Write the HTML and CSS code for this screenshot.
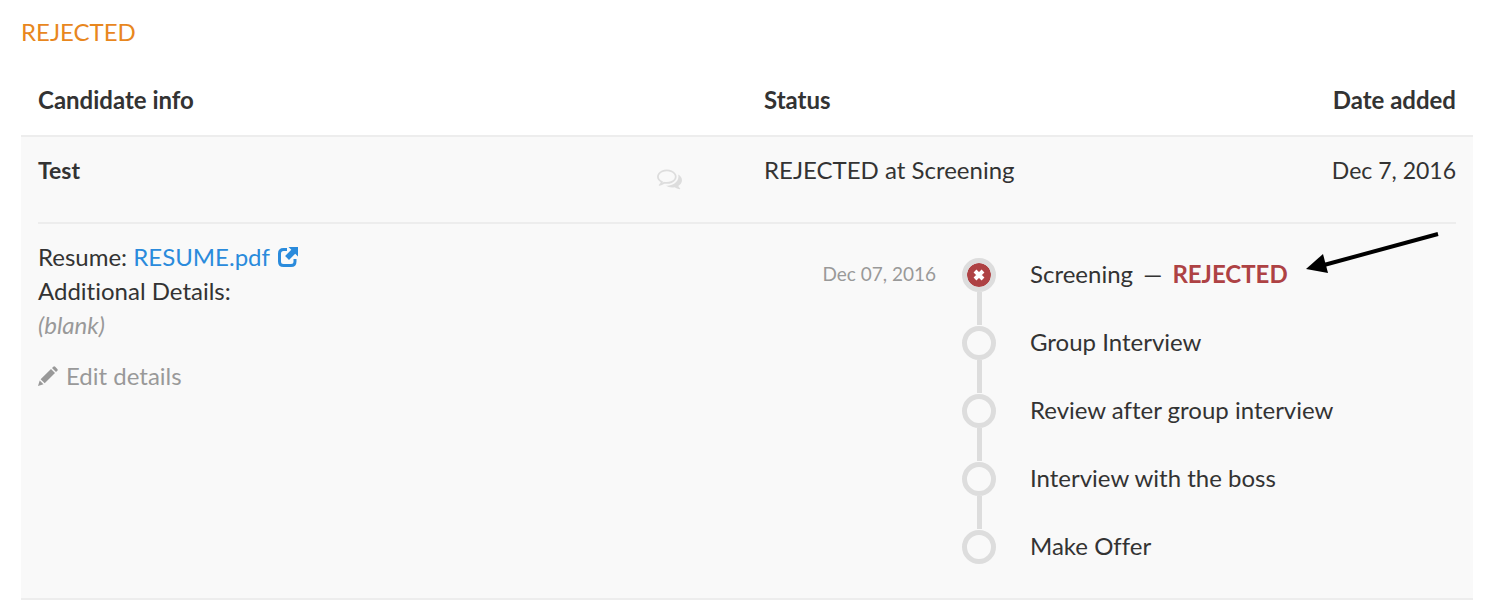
FILE: index.html
```html
<!DOCTYPE html>
<html lang="en">
<head>
    <meta charset="UTF-8">
    <meta name="viewport" content="width=device-width, initial-scale=1.0">
    <title>Rejected candidates</title>
    <link rel="stylesheet" href="styles.css">
</head>
<body>
    <h2 class="section-title">REJECTED</h2>

    <table class="candidates">
        <thead>
            <tr>
                <th class="col-info" scope="col">Candidate info</th>
                <th scope="col">Status</th>
                <th class="col-date" scope="col">Date added</th>
            </tr>
        </thead>
        <tbody>
            <tr class="summary">
                <td>
                    <div class="candidate">
                        <strong class="candidate-name">Test</strong>
                        <button type="button" class="comments-button" aria-label="Comments">
                            <svg viewBox="0 0 1792 1792" aria-hidden="true"><path d="M704 384q-153 0-286 52t-211.500 141-78.500 191q0 82 53 158t149 132l97 56-35 84q34-20 62-39l44-31 53 10q78 14 153 14 153 0 286-52t211.500-141 78.500-191-78.500-191-211.500-141-286-52zm0-128q191 0 353.500 68.500t256.500 186.500 94 257-94 257-256.500 186.500-353.500 68.500q-86 0-176-16-124 88-278 128-36 9-86 16h-3q-11 0-20.500-8t-11.500-21q-1-3-1-6.500t.5-6.500 2-6l2.500-5 3.500-5.500 4-5 4.500-5 4-4.500q5-6 23-25t26-29.500 22.500-29 25-38.500 20.500-44q-124-72-195-177t-71-224q0-139 94-257t256.500-186.500 353.500-68.500zm822 1169q10 24 20.500 44t25 38.500 22.500 29 26 29.500 23 25q1 1 4 4.500t4.500 5 4 5 3.500 5.500l2.500 5 2 6 .5 6.500-1 6.500q-3 14-13 22t-22 7q-50-7-86-16-154-40-278-128-90 16-176 16-271 0-472-132 58 4 88 4 161 0 309-45t264-129q125-92 192-212t67-254q0-77-23-152 129 71 204 178t75 230q0 120-71 224.500t-195 176.500z"/></svg>
                        </button>
                    </div>
                </td>
                <td>REJECTED at Screening</td>
                <td class="col-date">Dec 7, 2016</td>
            </tr>
            <tr class="expanded">
                <td colspan="3">
                    <div class="panel">
                        <!-- Candidate details -->
                        <div class="details">
                            <div>Resume: <a href="#" class="resume-link">RESUME.pdf<svg class="icon-external" viewBox="0 0 20 20" aria-hidden="true"><path d="M9 2.500H5.500Q1.500 2.500 1.500 6.500V14.500Q1.500 18.500 5.500 18.500H13Q17 18.500 17 14.500V12" fill="none" stroke="currentColor" stroke-width="3"/><path d="M10.500 0H20V9.500L17.200 6.700L11 12.900L7.100 9L13.300 2.800Z" fill="currentColor"/></svg></a></div>
                            <div>Additional Details:</div>
                            <div class="blank">(blank)</div>
                            <a href="#" class="edit-link">
                                <svg class="icon-pencil" viewBox="0 0 20 20" aria-hidden="true"><path d="M0 20L1.700 14.500L5.500 18.300ZM2.600 13.200L13 3L17 7L6.700 17.300ZM14 2L15.300 .700Q16.200 -.200 17.200 .800L19.300 2.900Q20.200 3.900 19.300 4.800L18 6Z" fill="currentColor"/></svg>
                                Edit details
                            </a>
                        </div>

                        <!-- Hiring stages -->
                        <ol class="timeline">
                            <li class="step">
                                <span class="step-date">Dec 07, 2016</span>
                                <span class="marker">
                                    <span class="dot dot-rejected">
                                        <svg viewBox="0 0 12 12" aria-hidden="true"><path d="M2 2L10 10M10 2L2 10" stroke="#fff" stroke-width="4"/></svg>
                                    </span>
                                </span>
                                <span class="step-name">
                                    Screening <span class="dash">—</span> <strong class="rejected">REJECTED</strong>
                                    <svg class="arrow" viewBox="0 0 134 42" aria-hidden="true"><path d="M132 2L18 33" stroke="#000" stroke-width="4"/><path d="M0 37L17 22L22 41Z"/></svg>
                                </span>
                            </li>
                            <li class="step">
                                <span class="marker"><span class="dot"></span></span>
                                <span class="step-name">Group Interview</span>
                            </li>
                            <li class="step">
                                <span class="marker"><span class="dot"></span></span>
                                <span class="step-name">Review after group interview</span>
                            </li>
                            <li class="step">
                                <span class="marker"><span class="dot"></span></span>
                                <span class="step-name">Interview with the boss</span>
                            </li>
                            <li class="step">
                                <span class="marker"><span class="dot"></span></span>
                                <span class="step-name">Make Offer</span>
                            </li>
                        </ol>
                    </div>
                </td>
            </tr>
        </tbody>
    </table>
</body>
</html>
```
FILE: styles.css
```css
body {
    margin: 0;
    padding: 15px 27px 16px 21px;
    background-color: #fff;
    color: #333;
    font-family: Lato, "Open Sans", sans-serif;
    font-size: 24px;
    font-variant-ligatures: none;
    line-height: 34px;
}
a {
    text-decoration: none;
}
.section-title {
    margin: 0 0 18px;
    color: #e8871e;
    font-size: 24px;
    font-weight: normal;
}
.candidates {
    width: 100%;
    border-collapse: separate;
    border-spacing: 0;
    border-bottom: 2px solid #ededed;
}
.candidates th {
    padding: 16px 17px 18px;
    border-bottom: 2px solid #ededed;
    text-align: left;
}
.candidates td {
    padding: 16px 17px 35px;
    background-color: #f9f9f9;
    vertical-align: top;
}
.candidates .col-info {
    width: 50%;
    box-sizing: border-box;
}
.candidates .col-date {
    text-align: right;
}
.candidates td.col-date {
    font-size: 23px;
}
.candidates .expanded td {
    padding: 0 17px;
}
.candidate {
    display: flex;
    justify-content: space-between;
}
.candidate-name {
    font-size: 23px;
}
.comments-button {
    margin: 0 48px 0 0;
    padding: 13px 0 0;
    border: none;
    background: none;
    color: #ddd;
    cursor: pointer;
    line-height: 0;
}
.comments-button svg {
    width: 25px;
    height: 25px;
    margin-bottom: -4px;
    fill: currentColor;
}
.panel {
    display: grid;
    grid-template-columns: 1fr 1fr;
    border-top: 2px solid #ededed;
}
.details {
    padding-top: 16px;
}
.resume-link {
    color: #2a8bdc;
}
.icon-external {
    width: 20px;
    height: 20px;
    margin-left: 8px;
    vertical-align: -1px;
}
.blank {
    color: #999;
    font-style: italic;
}
.edit-link {
    display: inline-flex;
    align-items: center;
    gap: 8px;
    margin-top: 17px;
    color: #999;
}
.icon-pencil {
    width: 20px;
    height: 20px;
}
.timeline {
    margin: 0;
    padding: 34px 0;
    list-style: none;
}
.step {
    display: grid;
    grid-template-columns: 189px 34px 1fr;
    column-gap: 26px;
    min-height: 68px;
}
.step:last-child {
    min-height: 34px;
}
.step-date,
.step-name {
    line-height: 32px;
}
.step-date {
    color: #999;
    font-size: 19px;
    text-align: right;
}
.marker {
    display: flex;
    flex-direction: column;
    align-items: center;
    grid-column: 2;
}
/* line down to the next step */
.step:not(:last-child) .marker::after {
    content: "";
    flex: 1;
    width: 5px;
    margin-bottom: 1px;
    background-color: #ddd;
}
.dot {
    display: flex;
    align-items: center;
    justify-content: center;
    box-sizing: border-box;
    width: 34px;
    height: 34px;
    border: 5px solid #ddd;
    border-radius: 50%;
}
.dot-rejected {
    background-color: #ae4244;
    background-clip: padding-box;
}
.dot-rejected svg {
    width: 12px;
    height: 12px;
}
.step-name {
    position: relative;
    grid-column: 3;
    align-self: start;
    justify-self: start;
    margin-left: 8px;
    white-space: nowrap;
}
.dash {
    margin: 0 4px;
}
.rejected {
    color: #ae4244;
}
/* pointer laid over the panel, beside the rejected stage */
.arrow {
    position: absolute;
    left: 100%;
    bottom: 16px;
    width: 134px;
    height: 42px;
    margin-left: 18px;
}
```
